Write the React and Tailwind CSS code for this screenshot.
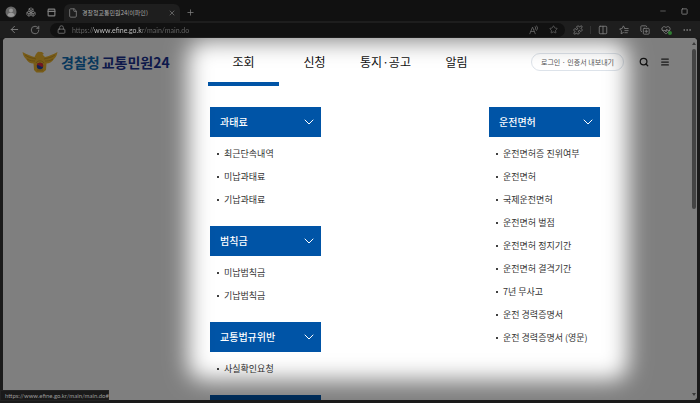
import React from "react";
import { ArrowLeft, RotateCw, Lock, File, X, Plus, Minus, Square, Star, Puzzle, Columns2, Boxes, PanelTop, Search, Menu, ChevronDown, Ellipsis, CopyPlus, HeartPulse } from "lucide-react";

const tabs = ["조회", "신청", "통지·공고", "알림"];

const left = [
  { title: "과태료", items: ["최근단속내역", "미납과태료", "기납과태료"] },
  { title: "범칙금", items: ["미납범칙금", "기납범칙금"] },
  { title: "교통법규위반", items: ["사실확인요청"] },
  { title: "", items: [] },
];

const right = [
  {
    title: "운전면허",
    items: [
      "운전면허증 진위여부",
      "운전면허",
      "국제운전면허",
      "운전면허 벌점",
      "운전면허 정지기간",
      "운전면허 결격기간",
      "7년 무사고",
      "운전 경력증명서",
      "운전 경력증명서 (영문)",
    ],
  },
];

function IconButton({ label, className = "", children }) {
  return (
    <button type="button" aria-label={label} className={"flex shrink-0 items-center justify-center " + className}>
      {children}
    </button>
  );
}

function Group({ title, items }) {
  return (
    <section>
      <button
        type="button"
        className="flex h-[30px] w-full items-center justify-between bg-[#0054a6] pr-1 pb-[2px] pl-[10px] text-[10px] font-medium text-white"
      >
        <span>{title}</span>
        <ChevronDown size={16} strokeWidth={1.5} className="mt-[2px]" />
      </button>
      <ul className="pt-[5px] pb-[15px]">
        {items.map((item) => (
          <li key={item} className="flex h-[23px] items-center gap-[5px] pl-[7px] text-[9px] whitespace-nowrap text-[#333]">
            <span className="size-[2px] rounded-full bg-black" />
            <a href="#">{item}</a>
          </li>
        ))}
      </ul>
    </section>
  );
}

function Emblem() {
  return (
    <svg viewBox="0 0 36 22" className="h-[22px] w-9 shrink-0" aria-hidden="true">
      <path
        d="M0.500 1 C5 3.500 9 5 12.500 6 L14 3 L16 0.800 L20 1 L22 3 L20.500 3.500 L23 6 C27 5 31 3.500 35.500 1 C35 4 34 6 32 8 C30 11 27 12.500 24.500 12.500 L24 19 L21 21.500 H14.500 L12 19 L11.500 12.500 C8 12.500 6 11 4 8 C2 6 1 4 .5 1Z"
        fill="#f0b830"
      />
      <path
        d="M3 4 C7 7 11 7 14 8 M5 8 C8 10 11 10 13 10 M33 4 C29 7 25 7 22 8 M31 8 C28 10 25 10 23 10 M14 12 C16 9 20 9 22 12 M15 19 H21"
        stroke="#a87a1c"
        strokeWidth=".5"
        fill="none"
      />
      <circle cx="18" cy="15" r="3.200" fill="#2342a8" />
      <path d="M14.800 15 A3.200 3.200 0 0 1 21.200 15 C20 17 19 15 18 15 S16 13 14.800 15" fill="#e8303c" />
    </svg>
  );
}

function ReadAloud() {
  return (
    <svg viewBox="0 0 24 24" className="size-[10px]" fill="none" stroke="currentColor" strokeWidth="2" strokeLinecap="round" aria-hidden="true">
      <path d="M2 21 L8.500 5 L15 21 M4.500 15.500 H12.500 M15 4 q3 3 0 7 M18.500 2 q5 5 0 11" />
    </svg>
  );
}

function FavoritesList() {
  return (
    <svg viewBox="0 0 24 24" className="size-[10px]" fill="none" stroke="currentColor" strokeWidth="2" strokeLinecap="round" strokeLinejoin="round" aria-hidden="true">
      <path d="M14 8 L10.500 2 L7.500 8.500 L1.500 9.500 L6 14 L5 21 L10.500 18 M14 8.500 H22 M14 13.500 H22 M14 18.500 H20" />
    </svg>
  );
}

function ProfileIcon() {
  return (
    <svg viewBox="0 0 12 12" className="size-3" aria-hidden="true">
      <circle cx="6" cy="6" r="5.500" fill="#666" />
      <circle cx="6" cy="4.500" r="2" fill="#999" />
      <path d="M2.500 9.500 a3.500 2.700 0 0 1 7 0 a5 5 0 0 1 -7 0" fill="#999" />
    </svg>
  );
}

function BrowserBar() {
  return (
    <header className="shrink-0 text-[#808080]">
      <div className="flex h-[21px] items-end bg-[#111]">
        <div className="flex h-[18px] items-center pl-[5px]">
          <IconButton label="프로필" className="w-3"><ProfileIcon /></IconButton>
          <IconButton label="작업 영역" className="ml-2 w-3"><Boxes size={10} /></IconButton>
          <IconButton label="탭 작업" className="ml-2 w-3"><PanelTop size={9} strokeWidth={3} /></IconButton>
        </div>
        <div className="ml-[7px] flex h-[17px] w-[116px] items-center rounded-t-md bg-[#1e1e1e] px-1">
          <File size={10} className="shrink-0" />
          <span className="ml-1 grow text-[6px] whitespace-nowrap text-[#aaa]">경찰청교통민원24(이파인)</span>
          <IconButton label="탭 닫기"><X size={8} /></IconButton>
        </div>
        <IconButton label="새 탭" className="mb-1 ml-[6px]"><Plus size={9} /></IconButton>
        <div className="mb-[6px] ml-auto flex gap-[14px] pr-3">
          <IconButton label="최소화"><Minus size={8} /></IconButton>
          <IconButton label="최대화"><Square size={7} strokeWidth={3} /></IconButton>
        </div>
      </div>
      <div className="flex h-[17px] items-center bg-[#1e1e1e] pr-2 pl-[9px]">
        <IconButton label="뒤로"><ArrowLeft size={11} /></IconButton>
        <IconButton label="새로 고침" className="ml-[10px]"><RotateCw size={10} /></IconButton>
        <div className="ml-[10px] flex h-[14px] min-w-0 grow items-center rounded-full bg-[#111] px-[7px]">
          <Lock size={9} className="shrink-0" />
          <input
            aria-label="주소"
            defaultValue="https://www.efine.go.kr/main/main.do"
            className="ml-[6px] h-full min-w-0 grow bg-[linear-gradient(to_right,#666_21px,#ccc_21px,#ccc_70px,#666_70px)] bg-clip-text pt-px font-['Lato',sans-serif] text-[7px] text-transparent outline-none"
          />
          <IconButton label="소리내어 읽기" className="text-[#666]"><ReadAloud /></IconButton>
          <IconButton label="즐겨찾기 추가" className="ml-[10px] text-[#666]"><Star size={9} /></IconButton>
        </div>
        <div className="ml-2 flex shrink-0 items-center gap-[11px]">
          <IconButton label="확장"><Puzzle size={10} /></IconButton>
          <span className="-mx-1 h-2 w-px bg-[#333]" />
          <IconButton label="화면 분할"><Columns2 size={10} /></IconButton>
          <IconButton label="즐겨찾기"><FavoritesList /></IconButton>
          <IconButton label="컬렉션"><CopyPlus size={10} /></IconButton>
          <IconButton label="브라우저 필수 요소" className="relative">
            <HeartPulse size={10} />
            <span className="absolute -right-px bottom-0 size-1 rounded-full bg-[#2f7d32]" />
          </IconButton>
          <IconButton label="설정 및 기타"><Ellipsis size={10} /></IconButton>
        </div>
      </div>
    </header>
  );
}

function SiteHeader() {
  return (
    <div className="flex h-12 shrink-0 items-center">
      <a href="#" className="flex w-[205px] shrink-0 items-center gap-[3px] pl-[19px] text-[14px] font-bold whitespace-nowrap text-[#1b3395]">
        <Emblem />
        <span className="flex gap-[2px]"><span className="text-[#1070b8]">경찰청</span><span>교통민원24</span></span>
      </a>
      <nav className="flex h-full shrink-0">
        {tabs.map((tab, index) => (
          <a
            key={tab}
            href="#"
            className={"flex w-[71px] items-center justify-center border-b-4 pt-1 text-[12px] text-[#111] " + (index === 0 ? "border-[#0054a6]" : "border-transparent")}
          >
            {tab}
          </a>
        ))}
      </nav>
      <div className="ml-auto flex shrink-0 items-center pr-5">
        <button type="button" className="h-[18px] w-[93px] rounded-full border border-[#dde3ea] text-[7px] whitespace-nowrap text-[#555]">
          로그인 · 인증서 내보내기
        </button>
        <IconButton label="검색" className="ml-[15px] text-[#222]"><Search size={10} strokeWidth={3} /></IconButton>
        <IconButton label="전체 메뉴" className="ml-[11px] text-[#333]"><Menu size={10} strokeWidth={3} /></IconButton>
      </div>
    </div>
  );
}

function Scrollbar() {
  return (
    <div className="flex w-[7px] shrink-0 flex-col items-center justify-between py-1" aria-hidden="true">
      <div className="flex flex-col items-center gap-1">
        <span className="border-x-2 border-b-3 border-x-transparent border-b-[#777]" />
        <span className="h-40 w-1 rounded-full bg-[#888]" />
      </div>
      <span className="border-x-2 border-t-3 border-x-transparent border-t-[#777]" />
    </div>
  );
}

export default function App() {
  return (
    <div className="flex h-screen flex-col overflow-hidden bg-[#1a1a1a] font-['Noto_Sans_CJK_KR','Noto_Sans',sans-serif]">
      <BrowserBar />
      <div className="relative mx-[3px] mb-[3px] flex min-h-0 grow overflow-hidden rounded bg-white">
        <main className="flex min-w-0 grow flex-col">
          <SiteHeader />
          <div className="flex justify-between pt-[21px] pr-[90px] pl-[207px]">
            {[left, right].map((groups, index) => (
              <div key={index} className="w-[111px]">
                {groups.map((group) => (
                  <Group key={group.title} {...group} />
                ))}
              </div>
            ))}
          </div>
        </main>
        <Scrollbar />
        <div className="pointer-events-none absolute top-[3px] right-[69px] bottom-5 left-[185px]">
          <div className="absolute -inset-[600px] rounded-[616px] shadow-[inset_0_0_22px_600px_rgba(0,0,0,0.5)]" />
        </div>
      </div>
      <div className="absolute bottom-[2px] left-0 h-[11px] w-[109px] border border-[#222] bg-[#1a1a1a] px-1 font-['Lato',sans-serif] text-[6px] leading-[9px] whitespace-nowrap text-[#999]">
        https://www.efine.go.kr/main/main.do#
      </div>
    </div>
  );
}
